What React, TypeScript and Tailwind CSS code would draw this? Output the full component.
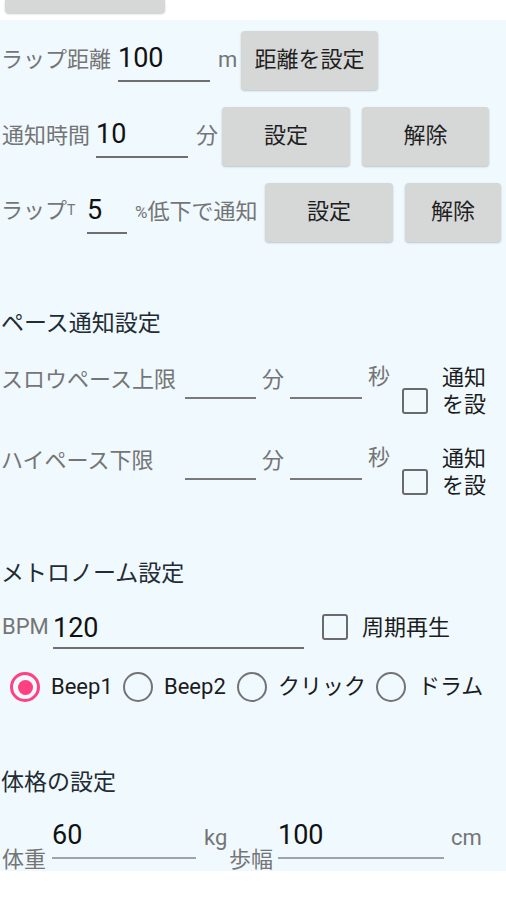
import React from "react";

const FONT = "font-['Roboto','Noto_Sans_CJK_JP',sans-serif]";

function Btn({ w, children }: { w: string; children: React.ReactNode }) {
  return (
    <div
      className={`${w} h-[59px] shrink-0 rounded-[4px] bg-[#d6d7d7] shadow-[0_1px_2px_rgba(0,0,0,0.22)] flex items-center justify-center text-[22px] leading-[30px] text-[#1e1e1e]`}
    >
      {children}
    </div>
  );
}

function Checkbox({ cls }: { cls: string }) {
  return (
    <div
      className={`${cls} w-[26px] h-[26px] shrink-0 rounded-[3px] border-[2.5px] border-[#6b6b6b]`}
    />
  );
}

function Radio({ checked }: { checked?: boolean }) {
  return checked ? (
    <div className="w-[30px] h-[30px] shrink-0 rounded-full border-[3px] border-[#ff4081] flex items-center justify-center">
      <div className="w-[15px] h-[15px] rounded-full bg-[#ff4081]" />
    </div>
  ) : (
    <div className="w-[30px] h-[30px] shrink-0 rounded-full border-[2.5px] border-[#737373]" />
  );
}

function PaceRow({ label }: { label: string }) {
  return (
    <div className="h-[81px] flex items-start">
      <div className="w-[185px] shrink-0 mt-[25px] pl-[1px] text-[22px] leading-[30px] text-[#757575] whitespace-nowrap">
        {label}
      </div>
      <div className="w-[71px] shrink-0 mt-[20px] h-[39px] border-b-2 border-[#7a7a7a]" />
      <div className="w-[34px] shrink-0 mt-[25px] pl-[6px] text-[22px] leading-[30px] text-[#757575]">
        分
      </div>
      <div className="w-[72px] shrink-0 mt-[20px] h-[39px] border-b-2 border-[#7a7a7a]" />
      <div className="w-[40px] shrink-0 mt-[22px] pl-[6px] text-[22px] leading-[30px] text-[#757575]">
        秒
      </div>
      <Checkbox cls="mt-[48px]" />
      <div className="ml-[14px] w-[46px] h-[56px] mt-[24px] overflow-hidden text-[22px] leading-[27px] text-[#1c1c1c]">
        通知を設定する
      </div>
    </div>
  );
}

export default function App() {
  return (
    <div className={`w-[506px] min-h-[900px] bg-white ${FONT}`}>
      {/* top partially visible button */}
      <div className="h-[20px]">
        <div className="ml-[5px] w-[160px] h-[13px] rounded-b-[4px] bg-[#d6d7d7] shadow-[0_1px_2px_rgba(0,0,0,0.22)]" />
      </div>

      <div className="bg-[#eff9fe] pt-[2px] h-[851px] overflow-hidden">
        {/* Row 1 */}
        <div className="h-[76px] flex items-center">
          <div className="w-[118px] shrink-0 pl-[1px] text-[22px] leading-[30px] text-[#757575] whitespace-nowrap">
            ラップ距離
          </div>
          <div className="w-[92px] shrink-0 h-[44px] pt-[4px] border-b-2 border-[#6f6f6f] text-[27px] leading-[32px] text-[#111]">
            100
          </div>
          <div className="w-[31px] shrink-0 pl-[8px] text-[22px] leading-[30px] text-[#757575]">
            m
          </div>
          <Btn w="w-[137px]">距離を設定</Btn>
        </div>

        {/* Row 2 */}
        <div className="h-[76px] flex items-center">
          <div className="w-[96px] shrink-0 pl-[2px] text-[22px] leading-[30px] text-[#757575] whitespace-nowrap">
            通知時間
          </div>
          <div className="w-[92px] shrink-0 h-[44px] pt-[4px] border-b-2 border-[#6f6f6f] text-[27px] leading-[32px] text-[#111]">
            10
          </div>
          <div className="w-[34px] shrink-0 pl-[8px] text-[22px] leading-[30px] text-[#757575]">
            分
          </div>
          <Btn w="w-[128px]">設定</Btn>
          <div className="w-[12px] shrink-0" />
          <Btn w="w-[127px]">解除</Btn>
        </div>

        {/* Row 3 */}
        <div className="h-[76px] flex items-center">
          <div className="w-[87px] shrink-0 pl-[1px] text-[22px] leading-[30px] text-[#757575] whitespace-nowrap">
            ラップ<span className="relative -top-[3px] text-[14px]">T</span>
          </div>
          <div className="w-[40px] shrink-0 h-[44px] pt-[4px] border-b-2 border-[#6f6f6f] text-[27px] leading-[32px] text-[#111]">
            5
          </div>
          <div className="w-[138px] shrink-0 pl-[8px] text-[22px] leading-[30px] text-[#757575] whitespace-nowrap">
            <span className="relative -top-[1px] text-[17px]">%</span>低下で通知
          </div>
          <Btn w="w-[128px]">設定</Btn>
          <div className="w-[12px] shrink-0" />
          <Btn w="w-[96px]">解除</Btn>
        </div>

        {/* Pace heading */}
        <div className="h-[58px]" />
        <div className="h-[32px] pl-[1px] text-[23px] leading-[32px] text-[#232b33]">
          ペース通知設定
        </div>
        <PaceRow label="スロウペース上限" />
        <PaceRow label="ハイペース下限" />

        {/* Metronome */}
        <div className="h-[56px]" />
        <div className="h-[32px] pl-[1px] text-[23px] leading-[32px] text-[#232b33]">
          メトロノーム設定
        </div>
        <div className="h-[70px] flex items-start">
          <div className="w-[53px] shrink-0 mt-[22px] pl-[2px] text-[22px] leading-[30px] text-[#757575]">
            BPM
          </div>
          <div className="w-[251px] shrink-0 mt-[18px] h-[41px] pt-[4px] border-b-2 border-[#6f6f6f] text-[27px] leading-[32px] text-[#111]">
            120
          </div>
          <Checkbox cls="ml-[18px] mt-[24px]" />
          <div className="ml-[14px] mt-[23px] text-[22px] leading-[30px] text-[#1c1c1c]">
            周期再生
          </div>
        </div>
        <div className="h-[54px] flex items-center">
          <div className="w-[10px] shrink-0" />
          <div className="w-[113px] shrink-0 flex items-center">
            <Radio checked />
            <span className="ml-[11px] text-[22px] leading-[30px] text-[#1c1c1c]">Beep1</span>
          </div>
          <div className="w-[114px] shrink-0 flex items-center">
            <Radio />
            <span className="ml-[11px] text-[22px] leading-[30px] text-[#1c1c1c]">Beep2</span>
          </div>
          <div className="w-[139px] shrink-0 flex items-center">
            <Radio />
            <span className="ml-[11px] text-[22px] leading-[30px] text-[#1c1c1c]">クリック</span>
          </div>
          <div className="flex items-center">
            <Radio />
            <span className="ml-[12px] text-[22px] leading-[30px] text-[#1c1c1c]">ドラム</span>
          </div>
        </div>

        {/* Body */}
        <div className="h-[53px]" />
        <div className="h-[32px] pl-[1px] text-[23px] leading-[32px] text-[#232b33]">
          体格の設定
        </div>
        <div className="h-[72px] flex items-start">
          <div className="w-[52px] shrink-0 mt-[46px] pl-[2px] text-[22px] leading-[30px] text-[#757575]">
            体重
          </div>
          <div className="w-[144px] shrink-0 mt-[16px] h-[44px] pt-[4px] border-b-2 border-[#a0a4a6] text-[27px] leading-[32px] text-[#111]">
            60
          </div>
          <div className="w-[32px] shrink-0 mt-[24px] pl-[8px] text-[22px] leading-[30px] text-[#757575]">
            kg
          </div>
          <div className="w-[50px] shrink-0 mt-[46px] pl-[1px] text-[22px] leading-[30px] text-[#757575]">
            歩幅
          </div>
          <div className="w-[166px] shrink-0 mt-[16px] h-[44px] pt-[4px] border-b-2 border-[#a0a4a6] text-[27px] leading-[32px] text-[#111]">
            100
          </div>
          <div className="mt-[24px] pl-[7px] text-[22px] leading-[30px] text-[#757575]">
            cm
          </div>
        </div>
      </div>
    </div>
  );
}
